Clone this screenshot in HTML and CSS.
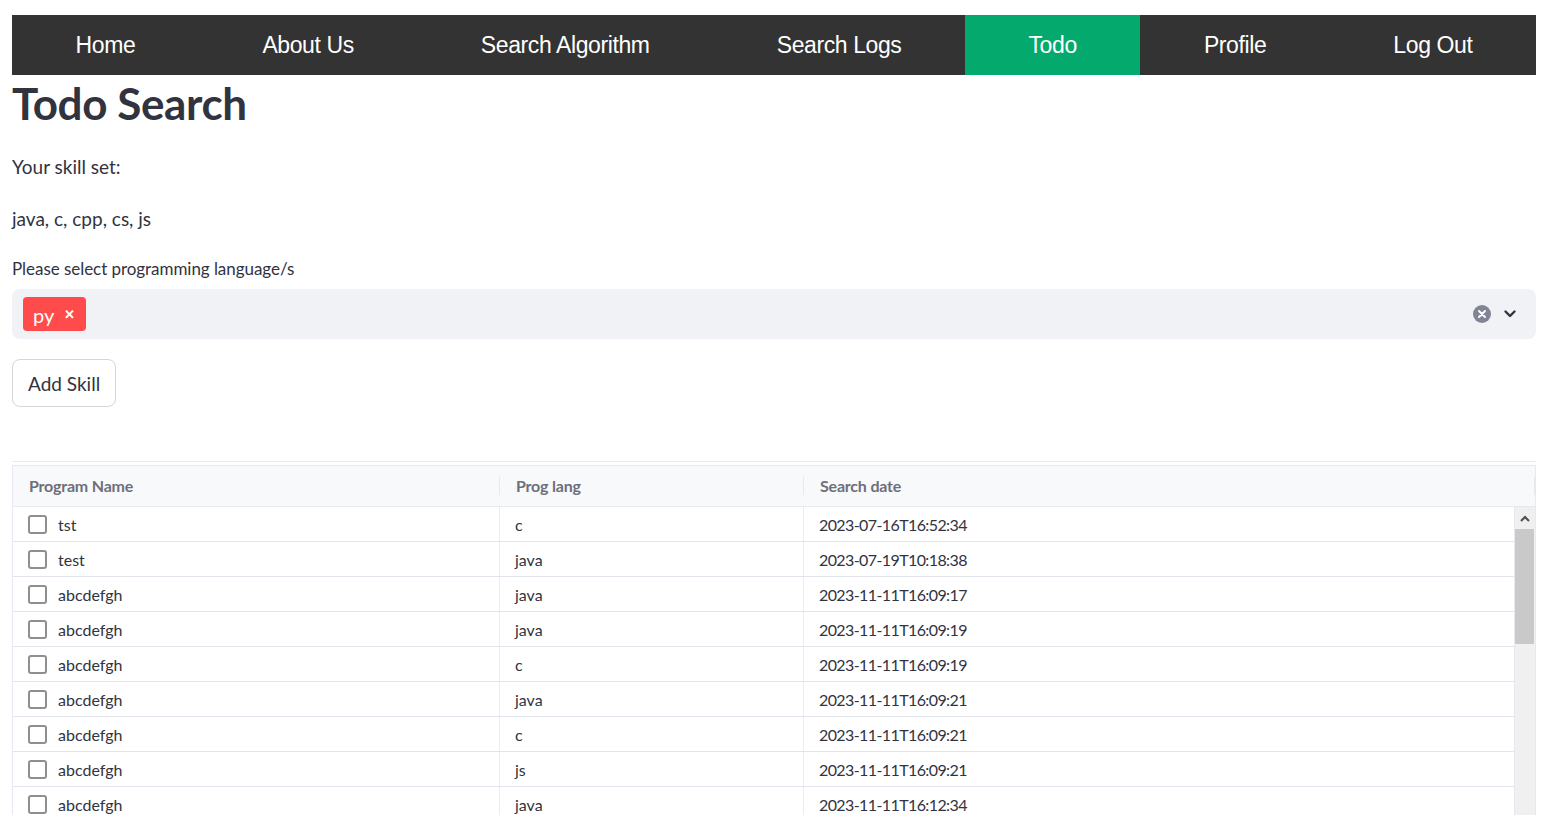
FILE: index.html
```html
<!DOCTYPE html>
<html>
<head>
<meta charset="utf-8">
<link rel="stylesheet" href="styles.css">
</head>
<body>
<div class="app">
  <nav class="nav">
    <a class="nav-item">Home</a>
    <a class="nav-item">About Us</a>
    <a class="nav-item">Search Algorithm</a>
    <a class="nav-item">Search Logs</a>
    <a class="nav-item active">Todo</a>
    <a class="nav-item">Profile</a>
    <a class="nav-item">Log Out</a>
  </nav>
  <h1 class="title">Todo Search</h1>
  <p class="text t1">Your skill set:</p>
  <p class="text t2">java, c, cpp, cs, js</p>
  <div class="label">Please select programming language/s</div>
  <div class="select">
    <span class="tag">py <span class="tag-x">&#x2715;</span></span>
    <span class="select-fill"></span>
    <svg class="clear-icon" width="18" height="18" viewBox="0 0 18 18"><circle cx="9" cy="9" r="9" fill="#808495"/><path d="M6 6 L12 12 M12 6 L6 12" stroke="#fff" stroke-width="2" stroke-linecap="round"/></svg>
    <svg class="chev-icon" width="14" height="14" viewBox="0 0 14 14"><path d="M2.5 4.5 L7 9 L11.5 4.5" fill="none" stroke="#31333F" stroke-width="2.4" stroke-linecap="round" stroke-linejoin="round"/></svg>
  </div>
  <button class="btn">Add Skill</button>
  <div class="rule"></div>
  <div class="table">
    <div class="thead">
      <div class="th c1">Program Name<span class="sep"></span></div>
      <div class="th c2">Prog lang<span class="sep"></span></div>
      <div class="th c3">Search date<span class="sep"></span></div>
    </div>
    <div class="tbody">
      <div class="rows">
        <div class="row"><div class="td c1"><span class="cb"></span>tst</div><div class="td c2">c</div><div class="td c3">2023-07-16T16:52:34</div></div>
        <div class="row"><div class="td c1"><span class="cb"></span>test</div><div class="td c2">java</div><div class="td c3">2023-07-19T10:18:38</div></div>
        <div class="row"><div class="td c1"><span class="cb"></span>abcdefgh</div><div class="td c2">java</div><div class="td c3">2023-11-11T16:09:17</div></div>
        <div class="row"><div class="td c1"><span class="cb"></span>abcdefgh</div><div class="td c2">java</div><div class="td c3">2023-11-11T16:09:19</div></div>
        <div class="row"><div class="td c1"><span class="cb"></span>abcdefgh</div><div class="td c2">c</div><div class="td c3">2023-11-11T16:09:19</div></div>
        <div class="row"><div class="td c1"><span class="cb"></span>abcdefgh</div><div class="td c2">java</div><div class="td c3">2023-11-11T16:09:21</div></div>
        <div class="row"><div class="td c1"><span class="cb"></span>abcdefgh</div><div class="td c2">c</div><div class="td c3">2023-11-11T16:09:21</div></div>
        <div class="row"><div class="td c1"><span class="cb"></span>abcdefgh</div><div class="td c2">js</div><div class="td c3">2023-11-11T16:09:21</div></div>
        <div class="row"><div class="td c1"><span class="cb"></span>abcdefgh</div><div class="td c2">java</div><div class="td c3">2023-11-11T16:12:34</div></div>
      </div>
      <div class="scrollbar">
        <div class="sb-arrow"><svg width="10" height="7" viewBox="0 0 10 7"><path d="M1 6 L5 2 L9 6" fill="none" stroke="#505050" stroke-width="2.2"/></svg></div>
        <div class="sb-thumb"></div>
        <div class="sb-track"></div>
      </div>
    </div>
  </div>
</div>
</body>
</html>
```

FILE: styles.css
```css
* { box-sizing: border-box; }
html, body { margin: 0; padding: 0; background: #fff; }
body { font-family: "Lato", "Noto Sans", sans-serif; color: #31333F; }

.app { padding: 15px 21px 0 12px; height: 828px; overflow: hidden; }

.nav { display: flex; height: 60px; background: #333333; }
.nav-item {
  flex: 1 1 auto;
  text-align: center;
  line-height: 61px;
  font-family: "Liberation Sans", Arial, sans-serif;
  font-size: 23px;
  color: #fff;
  letter-spacing: -0.4px;
}
.nav-item.active { background: #04AA6D; }

.title {
  margin: 0;
  height: 53px;
  line-height: 57px;
  font-size: 44px;
  font-weight: 700;
  color: #31333F;
  letter-spacing: -0.4px;
}

.text { margin: 0; font-size: 19px; line-height: 28px; }
.t1 { margin-top: 25px; }
.t2 { margin-top: 24px; }

.label { margin-top: 26px; font-size: 17px; line-height: 20px; letter-spacing: -0.05px; }

.select {
  margin-top: 10px;
  height: 50px;
  background: #F0F2F6;
  border-radius: 8px;
  display: flex;
  align-items: center;
  padding: 0 19px 0 11px;
}
.tag {
  background: #FF4B4B;
  color: #fff;
  border-radius: 4px;
  height: 34px;
  padding: 1px 11px 0 10px;
  display: flex;
  align-items: center;
  gap: 10px;
  font-size: 20px;
}
.tag-x { font-size: 13px; font-weight: 700; margin-top: -2px; }
.select-fill { flex: 1; }
.clear-icon { margin-right: 12px; }

.btn {
  display: block;
  margin-top: 20px;
  height: 48px;
  padding: 0 15px;
  background: #fff;
  border: 1px solid #D6D6D9;
  border-radius: 8px;
  font-family: inherit;
  font-size: 19px;
  color: #31333F;
}

.rule { margin-top: 54px; height: 1px; background: #E6E9EF; }

.table {
  margin-top: 3px;
  height: 350px;
  border: 1px solid #E6E9EF;
  border-bottom: none;
  overflow: hidden;
}
.thead {
  display: grid;
  grid-template-columns: 487px 304px 1fr;
  height: 41px;
  background: #F8F9FB;
  border-bottom: 1px solid #E6E9EF;
}
.th {
  position: relative;
  display: flex;
  align-items: center;
  padding-left: 16px;
  padding-bottom: 1px;
  font-size: 16px;
  font-weight: 700;
  color: #6D6F7A;
  letter-spacing: -0.2px;
}
.th .sep {
  position: absolute;
  right: 0;
  top: 11px;
  width: 1px;
  height: 18px;
  background: #E6E9EF;
}
.tbody { display: flex; }
.rows { flex: 1; }
.row {
  display: grid;
  grid-template-columns: 487px 304px 1fr;
  height: 35px;
  border-bottom: 1px solid #E1E4EA;
}
.td {
  display: flex;
  align-items: center;
  padding-left: 15px;
  font-size: 16px;
  color: #31333F;
  border-right: 1px solid #EBEDF1;
}
.td.c3 { border-right: none; letter-spacing: -0.6px; }
.cb {
  width: 19px;
  height: 19px;
  border: 2px solid #8F8F8F;
  border-radius: 3px;
  margin-right: 11px;
  background: #fff;
}

.scrollbar { width: 21px; display: flex; flex-direction: column; background: #F0F0F0; border-left: 1px solid #E6E9EF; }
.sb-arrow { height: 22px; display: flex; align-items: center; justify-content: center; }
.sb-thumb { height: 115px; background: #C9C9C9; margin: 0 1px 0 0; }
.sb-track { flex: 1; }
```
